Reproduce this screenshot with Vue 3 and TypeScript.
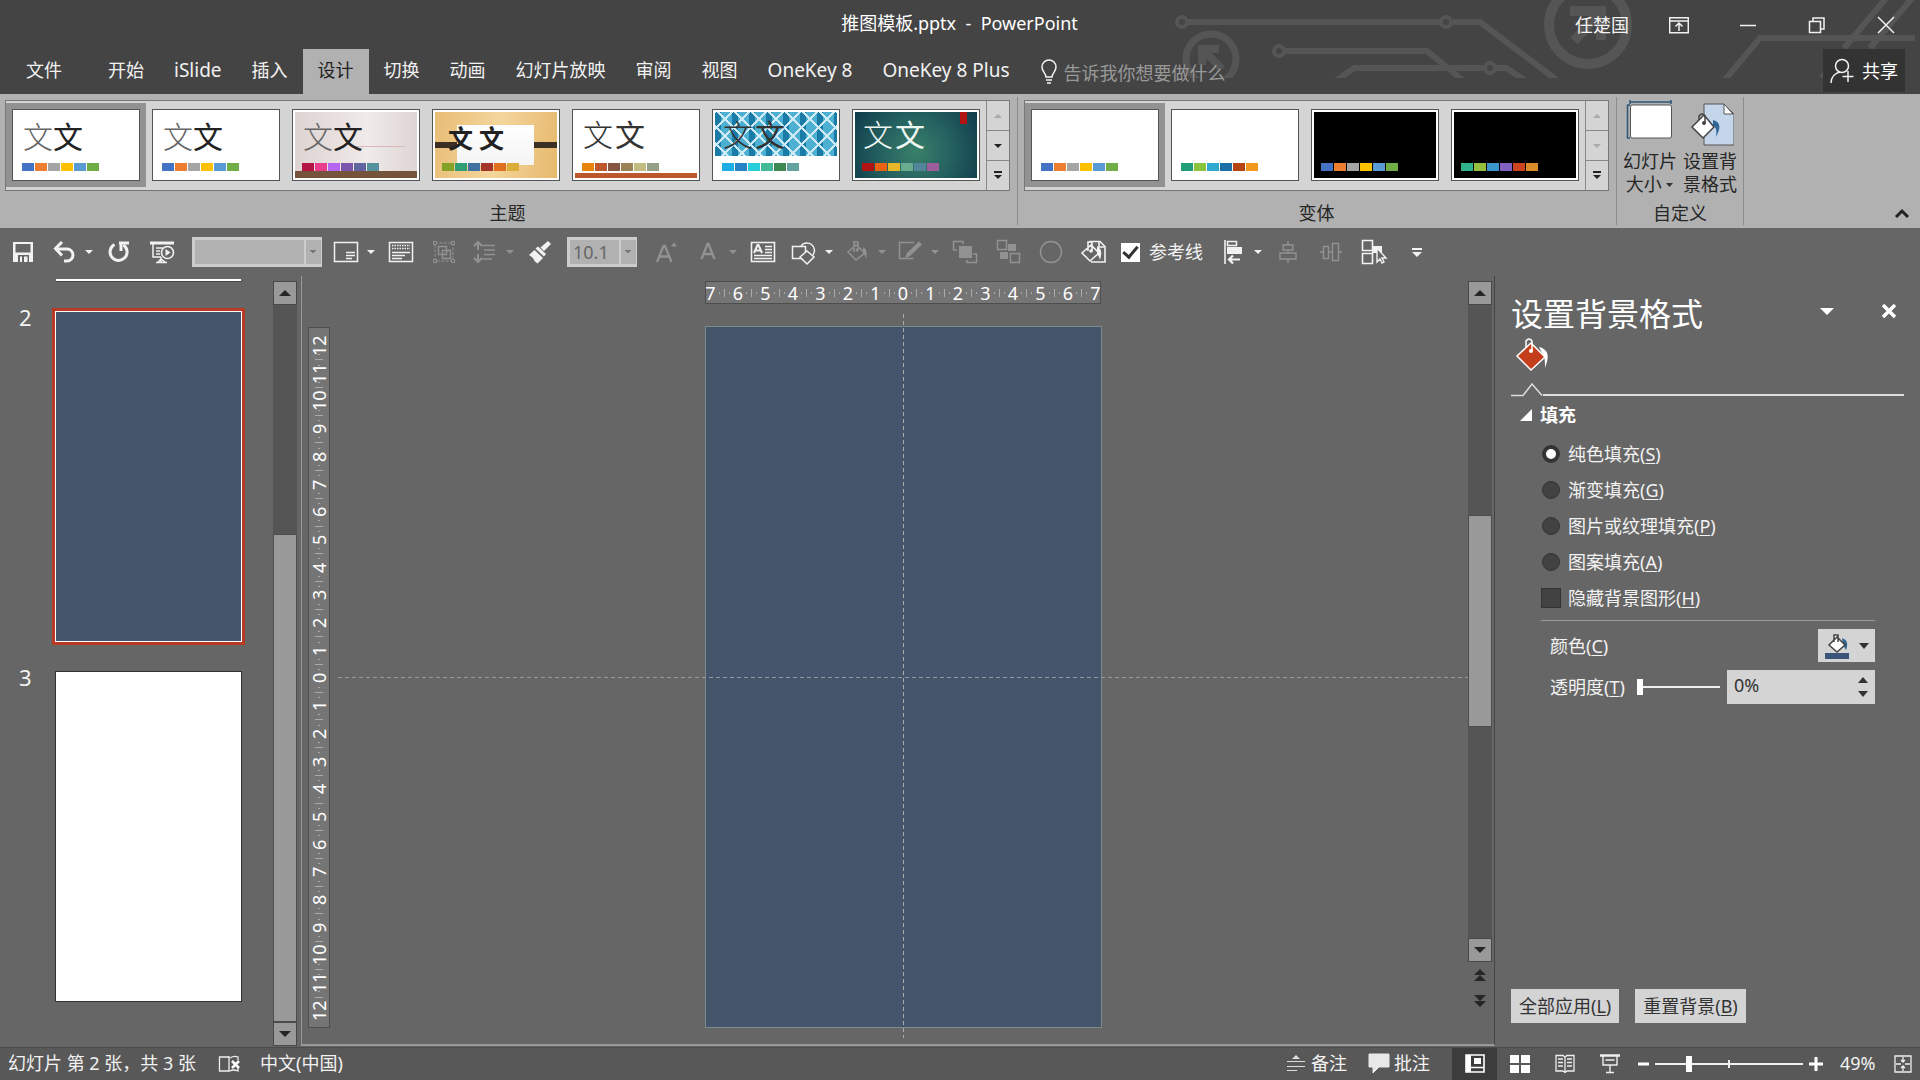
<script setup lang="ts">
import { ref } from 'vue'

interface Thumb {
  name: string
  kind: string
  swatches: string[]
  selected?: boolean
}

interface Tool {
  id: string
  label: string
  icon?: string
  kind?: 'split' | 'style' | 'size' | 'check' | 'more'
  off?: boolean
}

const office = ['#4472c4', '#ed7d31', '#a5a5a5', '#ffc000', '#5b9bd5', '#70ad47']

const tabs = ['文件', '开始', 'iSlide', '插入', '设计', '切换', '动画', '幻灯片放映', '审阅', '视图', 'OneKey 8', 'OneKey 8 Plus']
const activeTab = ref('设计')
const isLatin = (t: string): boolean => /^[A-Za-z]/.test(t)

const themes: Thumb[] = [
  { name: '主题 1', kind: 'plain', swatches: office, selected: true },
  { name: '主题 2', kind: 'plain', swatches: office },
  { name: '主题 3', kind: 'gallery-wall', swatches: ['#b31441', '#e83e8c', '#b565f2', '#7d55ad', '#6065a0', '#55929c'] },
  { name: '主题 4', kind: 'paper', swatches: ['#84a12a', '#2f9e74', '#40709f', '#a5352a', '#e0701f', '#dcae39'] },
  { name: '主题 5', kind: 'retro', swatches: ['#e8840c', '#bd582c', '#865640', '#9b8357', '#c2bc80', '#94a088'] },
  { name: '主题 6', kind: 'integral', swatches: ['#1cade4', '#2683c6', '#27ced7', '#42ba97', '#3e8853', '#62a39f'] },
  { name: '主题 7', kind: 'ion', swatches: ['#b01513', '#ea6312', '#e6b729', '#6aac90', '#54849a', '#9e5e9b'] },
]

const variants: Thumb[] = [
  { name: '变体 1', kind: 'blank', swatches: office, selected: true },
  { name: '变体 2', kind: 'blank', swatches: ['#1f9e78', '#8ac43f', '#2fa9d0', '#1c6fa6', '#b6440f', '#f2981b'] },
  { name: '变体 3', kind: 'black', swatches: office },
  { name: '变体 4', kind: 'black', swatches: ['#2eb38c', '#93c13f', '#3a97cc', '#8060c0', '#cc4422', '#dc8c28'] },
]

const tools: Tool[] = [
  { id: 'save', label: '保存', icon: 'save' },
  { id: 'undo', label: '撤消', icon: 'undo', kind: 'split' },
  { id: 'redo', label: '重复', icon: 'redo' },
  { id: 'show', label: '从头开始放映', icon: 'show' },
  { id: 'style', label: '字体', kind: 'style' },
  { id: 'layout', label: '版式', icon: 'layout', kind: 'split' },
  { id: 'text', label: '文本框', icon: 'text' },
  { id: 'group', label: '组合', icon: 'group', off: true },
  { id: 'spacing', label: '行距', icon: 'spacing', kind: 'split', off: true },
  { id: 'brush', label: '格式刷', icon: 'brush' },
  { id: 'size', label: '字号', kind: 'size' },
  { id: 'grow', label: '增大字号', icon: 'grow', off: true },
  { id: 'color', label: '字体颜色', icon: 'color', kind: 'split', off: true },
  { id: 'art', label: '文本', icon: 'art' },
  { id: 'shapes', label: '形状', icon: 'shapes', kind: 'split' },
  { id: 'fill', label: '形状填充', icon: 'fill', kind: 'split', off: true },
  { id: 'outline', label: '形状轮廓', icon: 'outline', kind: 'split', off: true },
  { id: 'front', label: '置于顶层', icon: 'front', off: true },
  { id: 'back', label: '置于底层', icon: 'back', off: true },
  { id: 'oval', label: '椭圆', icon: 'oval', off: true },
  { id: 'format', label: '设置背景格式', icon: 'format' },
  { id: 'guides', label: '参考线', kind: 'check' },
  { id: 'align', label: '左对齐', icon: 'align', kind: 'split' },
  { id: 'center', label: '水平居中', icon: 'center', off: true },
  { id: 'spread', label: '横向分布', icon: 'spread', off: true },
  { id: 'pane', label: '选择窗格', icon: 'pane' },
  { id: 'more', label: '自定义快速访问工具栏', icon: 'more', kind: 'more' },
]

const icons: Record<string, string> = {
  save: '<path d="M4 4h20v20H4z" fill="currentColor"/><path d="M6.500 6h15v8.500h-15z" fill="#666"/><path d="M9 17h11v7H9z" fill="#666"/><path d="M11 18.500h2V24h-2zM15 18.500h3.500V24H15z" fill="currentColor"/>',
  undo: '<path d="M6 11h11a6 6 0 0 1 0 12h-3" fill="none" stroke="currentColor" stroke-width="3"/><path d="M12 4L5.500 10.500l6.500 7" fill="none" stroke="currentColor" stroke-width="3"/>',
  redo: '<path d="M9.500 6.500a8.500 8.500 0 1 0 9 .5" fill="none" stroke="currentColor" stroke-width="3"/><path d="M14 5h10M16 4v9" fill="none" stroke="currentColor" stroke-width="3"/>',
  show: '<path d="M2 5h24" stroke="currentColor" stroke-width="3"/><path d="M5 6v13h8M8 10h7M8 13h4M8 16h4M13 19v5M8 24.500h11M10 24l3-3 4 3" fill="none" stroke="currentColor" stroke-width="1.500"/><circle cx="19.500" cy="14.500" r="6" fill="#666" stroke="currentColor" stroke-width="1.600"/><path d="M17.500 11l5 3.500-5 3.500z" fill="currentColor"/>',
  layout: '<path d="M2.500 4.500h23v19h-23zM14 14.500h9M14 17.500h9M14 20.500h6" fill="none" stroke="currentColor" stroke-width="1.500"/>',
  text: '<path d="M2.500 4.500h23v19h-23zM5 14.500h18M5 17.500h13M5 20.500h10" fill="none" stroke="currentColor" stroke-width="1.500"/><path d="M5 7.500h18M5 10.500h18" stroke="currentColor" stroke-dasharray="1.500 1" stroke-width="1.500"/>',
  group: '<path d="M5 5h18v18H5z" fill="none" stroke="currentColor" stroke-dasharray="3 1.500"/><path d="M8.500 8.500h8v8h-8zM12.500 12.500h8v8h-8z" fill="none" stroke="currentColor" stroke-width="1.400"/><path d="M3.500 3.500h3v3h-3zM21.500 3.500h3v3h-3zM3.500 21.500h3v3h-3zM21.500 21.500h3v3h-3z" fill="#666" stroke="currentColor"/>',
  spacing: '<path d="M7 4v8M7 16v8M3 8l4-4 4 4M3 20l4 4 4-4" fill="none" stroke="currentColor" stroke-width="2"/><path d="M10 7.500h14M13 12h11M13 16.500h11M11 21h10" stroke="currentColor" stroke-width="1.500"/>',
  brush: '<path d="M22 3l3 3-7 7-3.500-3.500z" fill="currentColor"/><path d="M12 8.500l8 7.500-2 2.500-8.500-8z" fill="currentColor"/><path d="M8.500 12l8.500 8-5.500 5.500-3-2.500-1.500-3-4-3z" fill="currentColor"/>',
  grow: '<path d="M4 24L10.500 8h1.500L18.500 24M6.500 18.500h10" fill="none" stroke="currentColor" stroke-width="2.300"/><path d="M18 8.500l3-4 3 4z" fill="currentColor"/>',
  color: '<path d="M7.500 21L13.500 6h1l6 15M9.500 16h9" fill="none" stroke="currentColor" stroke-width="2.300"/>',
  art: '<path d="M2.500 4.500h23v19h-23zM16 8.500h7M16 11.500h7M16 14.500h7M5 17.500h18M5 20.500h18" fill="none" stroke="currentColor" stroke-width="1.600"/><path d="M5 15l3.500-8h1L13 15M6.500 12.500h5" fill="none" stroke="currentColor" stroke-width="2"/>',
  shapes: '<path d="M2.500 8.500h13v12h-13z" fill="none" stroke="currentColor" stroke-width="1.500"/><path d="M11 8a7.500 7.500 0 1 1 12 9" fill="none" stroke="currentColor" stroke-width="1.500"/><path d="M17 13l7 6-7 7-7-7z" fill="#666" stroke="currentColor" stroke-width="1.500"/>',
  fill: '<path d="M13 7l9 8-9 7-8-8zM11 14V4h4v8" fill="none" stroke="currentColor" stroke-width="1.500"/><circle cx="14" cy="12" r="1.500" fill="currentColor"/><path d="M20 9c4 2 4 6 3 12-1-4-2-5-3-6z" fill="currentColor"/>',
  outline: '<path d="M18 4.500H3.500v16h14" fill="none" stroke="currentColor" stroke-width="1.500"/><path d="M23 3.500l3 3-12 11.500-5 2 2-5z" fill="currentColor"/>',
  front: '<path d="M8 8h13v12H8z" fill="currentColor"/><path d="M6 12H2.500V3.500H12V6M22 16h3.500v8.500H16V22" fill="none" stroke="currentColor" stroke-width="1.500"/>',
  back: '<path d="M14 6h8v7h-8zM6 14h8v7H6z" fill="currentColor"/><path d="M3.500 2.500h9v9h-9zM16.500 15.500h9v9h-9z" fill="#666" stroke="currentColor" stroke-width="1.500"/>',
  oval: '<circle cx="14" cy="14" r="10.500" fill="none" stroke="currentColor" stroke-width="1.500"/>',
  format: '<path d="M10 6V3.500h10l5 5V24H11" fill="none" stroke="currentColor" stroke-width="1.600"/><path d="M19 4v5h5" fill="none" stroke="currentColor" stroke-width="1.600"/><path d="M11 7l8 8-9 8-8-8zM8 13V4h4v9" fill="#666" stroke="currentColor" stroke-width="1.600"/><circle cx="11" cy="13" r="1.800" fill="currentColor"/><path d="M17 8c5 3 5 7 3 14-1-4-2-5-3-6z" fill="currentColor"/>',
  align: '<path d="M6 2v24" stroke="currentColor" stroke-width="1.600"/><path d="M8.500 3.500h9v4h-9z" fill="none" stroke="currentColor" stroke-width="1.500"/><path d="M8 9h15v7H8z" fill="currentColor"/><path d="M21 21.500H10M14 17.500l-4 4 4 4" fill="none" stroke="currentColor" stroke-width="2.200"/>',
  center: '<path d="M14 3v4M14 12v3M14 21v4M9 7h10v5H9zM6 15h16v6H6z" fill="none" stroke="currentColor" stroke-width="1.400"/>',
  spread: '<path d="M3 14h3M12 14h3M22 14h3M6.500 8.500h5v12h-5zM15.500 5.500h6v17h-6z" fill="none" stroke="currentColor" stroke-width="1.400"/>',
  pane: '<path d="M2.500 2.500h10v10h-10zM2.500 15.500h10v10h-10z" fill="none" stroke="currentColor" stroke-width="1.600"/><path d="M12 8h10v7H12z" fill="currentColor"/><path d="M17 10v14l3-3 2 4 2-1-2-4h4z" fill="#666" stroke="currentColor" stroke-width="1.400"/>',
  more: '<path d="M9 10h10v2H9zM9 14h10l-5 5z" fill="currentColor"/>',
}

const styleName = ref('')
const guides = ref(true)
const fillKind = ref('S')
const fills = [
  { key: 'S', text: '纯色填充' },
  { key: 'G', text: '渐变填充' },
  { key: 'P', text: '图片或纹理填充' },
  { key: 'A', text: '图案填充' },
]
const hideShapes = ref(false)
const transparency = ref(0)
const zoom = ref(22)

const span = (n: number): number[] => Array.from({ length: 2 * n + 1 }, (_, i) => Math.abs(i - n))
const across = span(7)
const down = span(12)
</script>

<template>
  <div class="app">
    <header class="top">
      <svg class="circuit" width="750" height="78" viewBox="0 0 750 78" fill="none" stroke="#555" stroke-width="6" aria-hidden="true">
        <path d="M18 22h252M283 22h27l82 62" />
        <circle cx="12" cy="22" r="5" stroke-width="4" />
        <circle cx="276" cy="22" r="5" stroke-width="4" />
        <circle cx="41" cy="59" r="25" stroke-width="7" />
        <path d="M32 65V49h17M33 50l19 19" stroke-width="8" />
        <circle cx="109" cy="51" r="5" stroke-width="4" />
        <path d="M115 51h142l38 31M164 82l20-14h130M326 68h10l22 14" />
        <circle cx="320" cy="68" r="5" stroke-width="4" />
        <circle cx="418" cy="25" r="39" stroke-width="10" />
        <path d="M400 11h31v29M430 12l-26 29" stroke-width="10" />
        <path d="M553 82l37-44h155M674 48l44-52M700 48l44-52M652 78l14-18" />
      </svg>
      <div class="titlebar">
        <h1>推图模板.pptx&nbsp; -&nbsp; PowerPoint</h1>
        <div class="window">
          <span class="user">任楚国</span>
          <button aria-label="功能区显示选项"><svg width="20" height="20" viewBox="0 0 20 20"><path d="M.7 2.700h18.600v15H.7zM.7 6h18.600M10 16V8M6.500 11.500L10 8l3.500 3.500" /></svg></button>
          <button aria-label="最小化"><svg width="20" height="20" viewBox="0 0 20 20"><path d="M2 10.500h16" /></svg></button>
          <button aria-label="向下还原"><svg width="20" height="20" viewBox="0 0 20 20"><path d="M2.500 6.500h11v11h-11zM6 6V3h11v11h-3" /></svg></button>
          <button aria-label="关闭"><svg width="20" height="20" viewBox="0 0 20 20"><path d="M2 2l16 16M18 2L2 18" /></svg></button>
        </div>
      </div>
      <nav class="tabs">
        <button v-for="t in tabs" :key="t" :class="{ active: t === activeTab, latin: isLatin(t) }" @click="activeTab = t">{{ t }}</button>
        <label class="tell">
          <svg width="18" height="26" viewBox="0 0 18 26" aria-hidden="true"><path d="M6 18c0-4-4-5-4-10a7 7 0 0 1 14 0c0 5-4 6-4 10zM6 21h6M7 24h4" /></svg>
          <input type="text" placeholder="告诉我你想要做什么" aria-label="告诉我你想要做什么" />
        </label>
        <button class="share">
          <svg width="24" height="26" viewBox="0 0 24 26" aria-hidden="true"><circle cx="12" cy="8" r="6.500" /><path d="M1 25c0-6 4-10 9-11M18 13v11M12.500 18.500h11" /></svg>
          共享
        </button>
      </nav>
    </header>

    <section class="ribbon">
      <div class="group">
        <div class="gallery">
          <button v-for="t in themes" :key="t.name" class="cell" :class="{ selected: t.selected }" :aria-label="t.name">
            <span class="thumb">
              <span class="art" :class="t.kind">
                <span class="glyphs"><span>文</span><span>文</span></span>
                <span class="swatches"><i v-for="c in t.swatches" :key="c" :style="{ background: c }"></i></span>
              </span>
            </span>
          </button>
          <div class="steps">
            <button class="dim" aria-label="上一行"><svg width="12" height="12"><path d="M2 8h8L6 4z" /></svg></button>
            <button aria-label="下一行"><svg width="12" height="12"><path d="M2 4h8L6 8z" /></svg></button>
            <button aria-label="其他"><svg width="12" height="12"><path d="M2 1h8v2H2zM2 5h8L6 9z" /></svg></button>
          </div>
        </div>
        <h2>主题</h2>
      </div>
      <div class="group">
        <div class="gallery">
          <button v-for="t in variants" :key="t.name" class="cell" :class="{ selected: t.selected }" :aria-label="t.name">
            <span class="thumb">
              <span class="art" :class="t.kind">
                <span class="swatches"><i v-for="c in t.swatches" :key="c" :style="{ background: c }"></i></span>
              </span>
            </span>
          </button>
          <div class="steps">
            <button class="dim" aria-label="上一行"><svg width="12" height="12"><path d="M2 8h8L6 4z" /></svg></button>
            <button class="dim" aria-label="下一行"><svg width="12" height="12"><path d="M2 4h8L6 8z" /></svg></button>
            <button aria-label="其他"><svg width="12" height="12"><path d="M2 1h8v2H2zM2 5h8L6 9z" /></svg></button>
          </div>
        </div>
        <h2>变体</h2>
      </div>
      <div class="group custom">
        <div class="big-buttons">
          <button>
            <svg width="48" height="51" viewBox="0 0 48 51" aria-hidden="true"><path d="M4 3h41M4 1v4M45 1v4M1 6h3M1 39h3M1.500 6v33" fill="none" stroke="#2f5577" stroke-width="1.500" /><rect x="4.500" y="6" width="41" height="33" rx="2" fill="#fff" stroke="#555" /></svg>
            <span>幻灯片<br />大小 <svg width="8" height="6"><path d="M0 1h7L3.500 5z" fill="#333" /></svg></span>
          </button>
          <button>
            <svg width="48" height="51" viewBox="0 0 48 51" aria-hidden="true"><path d="M18 5h20l10 10v31H18z" fill="#c5d5ea" stroke="#555" /><path d="M38 5v10h9z" fill="#fff" stroke="#555" /><path d="M27 21c8 2 8 8 3 17 1-8 0-9-3-12z" fill="#2f6799" /><path d="M18 16l10 12-11 11L6 28z" fill="#fff" stroke="#444" stroke-width="1.500" /><path d="M13 21v-4q3-4 6 0v7" fill="none" stroke="#444" stroke-width="1.500" /><circle cx="18" cy="24" r="2" fill="#444" /></svg>
            <span>设置背<br />景格式</span>
          </button>
        </div>
        <h2>自定义</h2>
      </div>
      <button class="collapse" aria-label="折叠功能区"><svg width="16" height="12"><path d="M2 10l6-6 6 6" fill="none" stroke="#222" stroke-width="3" /></svg></button>
    </section>

    <div class="quick">
      <template v-for="t in tools" :key="t.id">
        <select v-if="t.kind === 'style'" v-model="styleName" class="combo wide" :aria-label="t.label"><option value=""></option></select>
        <select v-else-if="t.kind === 'size'" class="combo" :aria-label="t.label"><option>10.1</option></select>
        <label v-else-if="t.kind === 'check'" class="guide-check"><input v-model="guides" type="checkbox" />{{ t.label }}</label>
        <button v-else class="tool" :class="{ split: t.kind === 'split', off: t.off }" :aria-label="t.label">
          <span class="face"><svg width="28" height="28" viewBox="0 0 28 28" aria-hidden="true" v-html="icons[t.icon ?? '']"></svg></span>
          <svg v-if="t.kind === 'split'" width="8" height="6" aria-hidden="true"><path d="M0 1h8L4 5z" fill="currentColor" /></svg>
        </button>
      </template>
    </div>

    <main class="work">
      <aside class="slides">
        <div class="slide-item first"><span></span><div class="mini edge"></div></div>
        <div class="slide-item"><span>2</span><div class="mini current"></div></div>
        <div class="slide-item"><span>3</span><div class="mini"></div></div>
      </aside>
      <div class="scroll left">
        <button aria-label="向上滚动"><svg width="12" height="8"><path d="M0 7h12L6 1z" /></svg></button>
        <div class="track"><div class="upper"></div><div class="grip"></div></div>
        <button aria-label="向下滚动"><svg width="12" height="8"><path d="M0 1h12L6 7z" /></svg></button>
      </div>

      <section class="editor">
        <div class="ruler down">
          <template v-for="(n, i) in down" :key="i">
            <span v-if="i" class="ticks"><i></i><i></i><i></i></span>
            <span class="num">{{ n }}</span>
          </template>
        </div>
        <div class="stage">
          <div class="ruler across">
            <template v-for="(n, i) in across" :key="i">
              <span v-if="i" class="ticks"><i></i><i></i><i></i></span>
              <span class="num">{{ n }}</span>
            </template>
          </div>
          <div class="slide"></div>
          <div v-if="guides" class="guide-h"></div>
          <div v-if="guides" class="guide-v"></div>
        </div>
        <div class="scroll right">
          <button aria-label="向上滚动"><svg width="12" height="8"><path d="M0 7h12L6 1z" /></svg></button>
          <div class="track"><div class="upper"></div><div class="grip"></div><div class="lower"></div></div>
          <button aria-label="向下滚动"><svg width="12" height="8"><path d="M0 1h12L6 7z" /></svg></button>
          <button class="bare" aria-label="上一张幻灯片"><svg width="12" height="14"><path d="M0 7h12L6 1zM0 13h12L6 7z" /></svg></button>
          <button class="bare" aria-label="下一张幻灯片"><svg width="12" height="14"><path d="M0 1h12L6 7zM0 7h12l-6 6z" /></svg></button>
        </div>
      </section>

      <aside class="pane">
        <div class="pane-head">
          <h2>设置背景格式</h2>
          <button aria-label="任务窗格选项"><svg width="14" height="8"><path d="M0 1h14L7 8z" fill="#fff" /></svg></button>
          <button aria-label="关闭窗格"><svg width="16" height="16"><path d="M2 2l12 12M14 2L2 14" stroke="#fff" stroke-width="3.500" /></svg></button>
        </div>
        <button class="pane-tab" aria-label="填充">
          <svg width="36" height="36" viewBox="0 0 36 36"><path d="M16 7l14 14-14 13L2 20z" fill="#c43e1c" stroke="#fff" stroke-width="1.500" /><path d="M11 12V5q3-4 6 0v10" fill="none" stroke="#fff" stroke-width="1.500" /><circle cx="16" cy="15" r="2" fill="#fff" /><path d="M24 11c11 3 10 11 6 21 0-8 0-9-2-13z" fill="#fff" /></svg>
        </button>
        <div class="pane-line"><svg width="32" height="14"><path d="M0 12.500h12L21 1l10 11.500" fill="none" stroke="#ddd" stroke-width="1.500" /></svg><span></span></div>
        <h3><svg width="12" height="12"><path d="M12 0v12H0z" fill="#fff" /></svg>填充</h3>
        <div class="options">
          <label v-for="f in fills" :key="f.key"><input v-model="fillKind" type="radio" name="fill" :value="f.key" /><span>{{ f.text }}(<u>{{ f.key }}</u>)</span></label>
          <label><input v-model="hideShapes" type="checkbox" /><span>隐藏背景图形(<u>H</u>)</span></label>
        </div>
        <div class="settings">
          <div class="row">
            <label for="fill-color">颜色(<u>C</u>)</label>
            <button id="fill-color" class="picker" aria-label="颜色">
              <svg width="26" height="26" viewBox="0 0 26 26"><path d="M1 20h24v6H1z" fill="#3b5578" /><path d="M18 5c6 2 6 7 4 12l-3-5z" fill="#2f6799" /><path d="M13 4l8 8-8 7-8-7zM10 9V2h4v7" fill="#fff" stroke="#444" stroke-width="1.500" /></svg>
              <svg width="10" height="6"><path d="M0 0h10L5 6z" fill="#333" /></svg>
            </button>
          </div>
          <div class="row">
            <label for="transparency">透明度(<u>T</u>)</label>
            <input id="transparency" v-model.number="transparency" class="slider" type="range" min="0" max="100" />
            <div class="spin">
              <input type="text" :value="transparency + '%'" aria-label="透明度数值" />
              <div>
                <button aria-label="增加"><svg width="10" height="6"><path d="M0 6h10L5 0z" /></svg></button>
                <button aria-label="减少"><svg width="10" height="6"><path d="M0 0h10L5 6z" /></svg></button>
              </div>
            </div>
          </div>
        </div>
        <div class="pane-foot">
          <button>全部应用(<u>L</u>)</button>
          <button>重置背景(<u>B</u>)</button>
        </div>
      </aside>
    </main>

    <footer class="status">
      <span>幻灯片 第 2 张，共 3 张</span>
      <button class="spell" aria-label="拼写检查"><svg width="24" height="20" viewBox="0 0 24 20"><path d="M11 3H1.500v14H11M11 2v16M12 4c3-2 5-2 8-1v3M12 17c3-2 5-1 8 0v-3" fill="none" stroke="#eee" stroke-width="1.300" /><path d="M14 7l7 7M21 7l-7 7" stroke="#fff" stroke-width="2.500" /></svg></button>
      <span>中文(中国)</span>
      <button class="notes"><svg width="18" height="18"><path d="M9 1l4 4H5zM0 7h18v1H0zM0 12h18v1H0zM0 16h10v1H0z" fill="#ddd" /></svg>备注</button>
      <button class="comments"><svg width="24" height="20"><path d="M2 1h20v13H12l-6 6v-6H2z" fill="#e8e8e8" stroke="#e8e8e8" /></svg>批注</button>
      <div class="views">
        <button class="on" aria-label="普通视图"><svg width="20" height="20"><path d="M1 1h18v17H1zM6 13.500h13" fill="none" stroke="#fff" stroke-width="1.600" /><path d="M1 1h5v17H1zM9 4h7v6H9z" fill="#fff" /></svg></button>
        <button aria-label="幻灯片浏览"><svg width="20" height="20"><path d="M0 1h9v8H0zM11 1h9v8h-9zM0 11h9v8H0zM11 11h9v8h-9z" fill="#fff" /></svg></button>
        <button aria-label="阅读视图"><svg width="20" height="20"><path d="M10 2v17M10 3l-2-1.500H1V17h7l2 1.500 2-1.500h7V1.500h-7zM3 5h5M3 8.500h5M3 12h5M12 5h5M12 8.500h5M12 12h5" fill="none" stroke="#eee" stroke-width="1.300" /></svg></button>
        <button aria-label="幻灯片放映"><svg width="20" height="20"><path d="M0 1.500h20" stroke="#eee" stroke-width="2.500" /><path d="M3 2v9h14V2M5.500 6h9M10 11v7M6 18.500h8" fill="none" stroke="#eee" stroke-width="1.400" /></svg></button>
      </div>
      <button class="step" aria-label="缩小"><svg width="14" height="14"><path d="M2 7h11" stroke="#fff" stroke-width="3" /></svg></button>
      <input v-model.number="zoom" class="zoom" type="range" min="0" max="100" aria-label="缩放" />
      <button class="step" aria-label="放大"><svg width="14" height="14"><path d="M0 7h14M7 0v14" stroke="#fff" stroke-width="3" /></svg></button>
      <span class="percent">49%</span>
      <button class="fit" aria-label="使幻灯片适应当前窗口"><svg width="18" height="18"><path d="M1 1h16v16H1zM9 2v5M9 11v5M2 9h5M11 9h5M7 5l2 2 2-2M7 13l2-2 2 2" fill="none" stroke="#eee" stroke-width="1.300" /></svg></button>
    </footer>
  </div>
</template>

<style>
body { background: #666; }
</style>

<style scoped>
* { box-sizing: border-box; }
.app {
  display: flex;
  flex-direction: column;
  min-height: 100vh;
  background: #666;
  color: #f2f2f2;
  font: 18px/24px "Noto Sans", "Noto Sans CJK SC", sans-serif;
}
button, input, select { font: inherit; color: inherit; margin: 0; }
button { border: 0; padding: 0; background: none; cursor: pointer; }
h1, h2, h3 { margin: 0; font: inherit; }
svg { flex: none; }
u { text-underline-offset: 2px; }

.top { position: relative; background: #444; }
.circuit { position: absolute; right: 0; top: 0; }
.titlebar, .tabs { position: relative; display: flex; }
.titlebar { height: 49px; justify-content: flex-end; }
h1 { flex: 1; padding-left: 344px; text-align: center; line-height: 46px; color: #fff; }
.window { display: flex; align-items: center; }
.window .user { padding-right: 15px; line-height: 40px; }
.window button { width: 69px; height: 40px; display: flex; align-items: center; justify-content: center; }
.window svg, .tell svg, .share svg { fill: none; stroke: #f2f2f2; stroke-width: 1.5px; }
.tabs { height: 45px; }
.tabs > button { padding: 0 15px 4px; white-space: nowrap; }
.tabs > button.latin { font-size: 19px; }
.tabs > button:first-child { padding: 0 31px 4px 26px; }
.tabs > button.active { background: #b1b1b1; color: #222; }
.tell { display: flex; align-items: center; gap: 6px; padding-left: 15px; }
.tell input { width: 190px; padding: 2px 0 0; border: 0; background: none; outline: 0; }
.tell input::placeholder { color: #999; opacity: 1; }
.tabs > .share { display: flex; align-items: center; gap: 8px; height: 43px; margin: 0 15px 0 auto; padding: 0 7px; background: #333; color: #fff; }

.ribbon { display: flex; height: 134px; padding: 3px 0 3px 5px; background: #b1b1b1; color: #262626; }
.group { display: flex; flex-direction: column; justify-content: space-between; padding: 3px 7px 0 0; margin-right: 6px; border-right: 1px solid #8c8c8c; }
.group h2 { text-align: center; height: 24px; }
.gallery { display: flex; height: 91px; background: #d4d4d4; border: 1px solid #777; }
.cell { display: flex; align-items: center; width: 140px; padding: 0 6px; border: 0 solid #d4d4d4; border-width: 2px 0 3px; }
.cell.selected { background: #929292; }
.thumb { flex: 1; height: 72px; padding: 2px; border: 1px solid #555; background: #fff; }
.art { display: flex; flex-direction: column; justify-content: space-between; height: 66px; padding: 6px 7px 7px; }
.glyphs { display: flex; height: 34px; padding-left: 1px; font: 300 30px/34px "Noto Sans CJK SC", sans-serif; color: #666; }
.glyphs span:last-child { font-weight: 400; color: #222; }
.swatches { display: flex; gap: 1px; margin-top: auto; }
.swatches i { width: 12px; height: 8px; }
.black { background: #000; }
.gallery-wall { background: linear-gradient(#d9b8bb, #d9b8bb) 60px 34px / 50px 1px no-repeat, linear-gradient(transparent 59px, #75543b 59px), linear-gradient(90deg, #ddd4d2, #f0eaea 60%, #ddd5d3); }
.paper { background: linear-gradient(#fff, #f4f4f4) 22px 13px / 77px 40px no-repeat, linear-gradient(#3c3024, #3c3024) 0 30px / 100% 6px no-repeat, linear-gradient(100deg, #e8bd76, #f4d69c 50%, #e6b86c); }
.paper .glyphs { gap: 6px; padding-left: 6px; font: bold 25px/38px "Noto Sans CJK SC", sans-serif; }
.paper .glyphs span { color: #222; font-weight: bold; }
.paper .swatches { padding-left: 0; }
.retro { background: linear-gradient(transparent 61px, #bd582c 61px); }
.retro .glyphs, .integral .glyphs, .ion .glyphs { gap: 2px; line-height: 30px; }
.integral {
  background:
    linear-gradient(#fff, #fff) 0 100% / 100% 22px no-repeat,
    repeating-linear-gradient(45deg, #cdeaf5 0 2px, transparent 2px 12px),
    repeating-linear-gradient(-45deg, #cdeaf5 0 2px, transparent 2px 12px),
    repeating-linear-gradient(90deg, #1a7ca6 0 6px, #4db0d2 6px 17px);
}
.integral .glyphs span, .retro .glyphs span { color: #333; }
.ion { background: linear-gradient(#b01513, #b01513) 105px 0 / 7px 12px no-repeat, radial-gradient(circle at 50% 60%, #398169, #246060 50%, #103c4a); }
.ion .glyphs span { color: #eef6f2; }
.steps { display: flex; flex-direction: column; width: 23px; border-left: 1px solid #888; }
.steps button { flex: 1; display: flex; align-items: center; justify-content: center; }
.steps button + button { border-top: 1px solid #888; }
.steps svg { fill: #222; }
.steps .dim svg { fill: #aaa; }
.custom { padding: 3px 6px 0 0; }
.big-buttons { display: flex; gap: 6px; margin-top: -1px; }
.big-buttons button { width: 54px; height: 92px; line-height: 23px; white-space: nowrap; }
.big-buttons button > svg { display: block; margin: 0 auto; }
.big-buttons span svg { vertical-align: 3px; }
.collapse { margin: auto 10px 6px auto; height: 12px; display: flex; }

.quick { display: flex; align-items: center; height: 48px; padding-left: 1px; }
.tool { display: flex; align-items: center; width: 43px; height: 40px; }
.tool.split { width: 53px; }
.face { display: flex; flex: 1; justify-content: center; }
.split .face { flex: none; width: 39px; margin-right: 2px; }
.off { color: #929292; }
.combo { appearance: none; width: 70px; height: 30px; margin: 0 8px 0 6px; padding: 0 20px 0 3px; border: 3px solid #ccc; border-right-width: 1px; border-radius: 0; color: #666; line-height: 22px;
  background: conic-gradient(from -45deg at 50% 100%, #777 90deg, transparent 0) right 4px top 10px / 8px 4px no-repeat, linear-gradient(90deg, transparent calc(100% - 17px), #ccc calc(100% - 17px), #ccc calc(100% - 15px), transparent 0), #b1b1b1; }
.combo { background: linear-gradient(to bottom left, transparent 50%, #777 50%) right 4px top 10px / 4px 4px no-repeat, linear-gradient(to bottom right, transparent 50%, #777 50%) right 8px top 10px / 4px 4px no-repeat, linear-gradient(90deg, transparent calc(100% - 17px), #ccc calc(100% - 17px), #ccc calc(100% - 15px), transparent 0), #b1b1b1; }
.combo { background: linear-gradient(to top left, transparent 50%, #777 50%) right 4px top 10px / 4px 4px no-repeat, linear-gradient(to top right, transparent 50%, #777 50%) right 8px top 10px / 4px 4px no-repeat, linear-gradient(90deg, transparent calc(100% - 17px), #ccc calc(100% - 17px), #ccc calc(100% - 15px), transparent 0), #b1b1b1; }
.combo.wide { width: 130px; margin: 0 4px 0 9px; }
.guide-check { display: flex; align-items: center; gap: 9px; width: 98px; padding-left: 6px; white-space: nowrap; }
.guide-check input { appearance: none; width: 19px; height: 19px; background: #fff; display: grid; place-items: center; }
.guide-check input:checked::after { content: ""; width: 6px; height: 12px; margin-top: -3px; border: solid #333; border-width: 0 3px 3px 0; transform: rotate(40deg); }

.work { flex: 1; display: flex; min-height: 0; }
.slides { width: 273px; padding-top: 3px; }
.slide-item { display: flex; padding-left: 19px; margin-bottom: 29px; }
.slide-item span { width: 36px; font-size: 22px; line-height: 12px; }
.mini { width: 187px; height: 331px; background: #fff; border: 1px solid #333; }
.mini.edge { height: 3px; border-top: 0; border-color: #fff #666 #444; background: #fff; }
.mini.current { border: 1px solid #fff; background: #44546a; outline: 3px solid #b83a24; }
.scroll { display: flex; flex-direction: column; width: 24px; padding-top: 5px; }
.scroll button { display: flex; align-items: center; justify-content: center; height: 24px; background: #999; border: 1px solid #484848; }
.scroll svg { fill: #262626; }
.scroll .bare { background: none; border: 0; height: 26px; }
.track { flex: 1; display: flex; flex-direction: column; background: #555; }
.grip { background: #999; border: 1px solid #4d4d4d; }
.left .upper { flex: 229; }
.left .grip { flex: 487; }
.right .upper { flex: 211; }
.right .grip { flex: 210; }
.right .lower { flex: 212; }
.scroll.left { padding-bottom: 1px; }
.scroll.right { width: 24px; margin: 0 2px 0 auto; padding-bottom: 30px; }

.editor { flex: 1; display: flex; margin-left: 4px; border-left: 1px solid #999; border-bottom: 2px solid #999; margin-bottom: 1px; border-right: 1px solid #444; }
.ruler { display: flex; align-items: center; background: #757575; border: 1px solid #4d4d4d; color: #fff; }
.ruler .ticks { flex: 1; display: flex; align-items: center; justify-content: space-evenly; }
.ruler i { background: #aaa; width: 1px; height: 2px; }
.ruler i:nth-child(2) { height: 8px; }
.ruler .num { display: flex; justify-content: center; width: 9px; }
.ruler.across { width: 396px; height: 23px; }
.ruler.down { flex-direction: column; width: 22px; margin: 51px 0 16px 6px; padding: 14px 0 12px; }
.down .ticks { flex-direction: column; }
.down .num { height: 8px; width: 20px; align-items: center; writing-mode: vertical-rl; transform: rotate(180deg); }
.down i { width: 2px; height: 1px; }
.down i:nth-child(2) { width: 8px; height: 1px; }
.stage { position: relative; flex: 1; display: flex; flex-direction: column; align-items: center; margin-left: 8px; padding: 5px 0 16px; }
.slide { flex: 1; width: 397px; margin-top: 22px; background: #44546a; border: 1px solid #7b8a8a; }
.guide-h { position: absolute; left: 0; right: 0; top: 401px; height: 1px; background: repeating-linear-gradient(90deg, #999 0 4px, transparent 4px 7px); }
.guide-v { position: absolute; left: 50%; top: 38px; bottom: 6px; width: 1px; background: repeating-linear-gradient(#aaa 0 4px, transparent 4px 7px); }

.pane { display: flex; flex-direction: column; width: 425px; padding: 20px 16px 24px 16px; }
.pane-head { display: flex; align-items: center; height: 36px; }
.pane-head h2 { flex: 1; font-size: 32px; line-height: 36px; color: #fff; }
.pane-head button { display: flex; justify-content: center; width: 30px; margin-bottom: 6px; }
.pane-head button + button { margin-left: 32px; }
.pane-tab { display: flex; width: 36px; height: 36px; margin: 4px 0 10px 4px; }
.pane-line { display: flex; align-items: flex-end; height: 14px; margin-top: 1px; }
.pane-line span { flex: 1; height: 2px; margin-bottom: 1px; background: #ddd; }
h3 { display: flex; align-items: center; gap: 8px; height: 36px; padding-left: 9px; font-weight: bold; color: #fff; }
.options { display: flex; flex-direction: column; margin: 3px 29px 0 30px; padding-bottom: 4px; border-bottom: 1px solid #999; }
.options label { display: flex; align-items: center; gap: 8px; height: 36px; }
.options input { appearance: none; width: 18px; height: 18px; margin-left: 1px; border: 1px solid #333; background: #424242; display: grid; place-items: center; }
.options input[type="checkbox"] { width: 20px; height: 20px; margin: 0 -1px 0 0; }
.options input[type="radio"] { border-radius: 50%; }
.options input:checked { border: 4px solid #333; background: #fff; }
.settings { display: flex; flex-direction: column; gap: 8px; margin: 8px 29px 0 39px; }
.row { display: flex; align-items: center; height: 33px; }
.picker { display: flex; align-items: center; justify-content: center; gap: 9px; width: 57px; height: 33px; margin-left: auto; background: #d4d4d4; }
.slider, .zoom { appearance: none; height: 20px; background: linear-gradient(#eee, #eee) 0 50% / 100% 2px no-repeat; }
.slider { width: 83px; margin-left: auto; }
.slider::-webkit-slider-thumb, .zoom::-webkit-slider-thumb { appearance: none; width: 6px; height: 16px; background: #fff; }
.spin { display: flex; width: 148px; height: 34px; margin-left: 7px; background: #d4d4d4; color: #333; }
.spin input { flex: 1; min-width: 0; padding: 0 0 3px 7px; border: 0; background: none; }
.spin > div { display: flex; flex-direction: column; width: 24px; padding: 3px 0; }
.spin button { flex: 1; display: flex; align-items: center; justify-content: center; }
.spin svg { fill: #333; }
.pane-foot { display: flex; gap: 16px; margin-top: auto; }
.pane-foot button { height: 34px; padding: 0 8px; background: #d4d4d4; color: #333; }

.status { display: flex; align-items: center; height: 33px; padding: 0 8px; background: #585858; border-top: 1px solid #4a4a4a; white-space: nowrap; }
.status > span, .status .notes, .status .comments { padding-bottom: 2px; }
.status button { display: flex; align-items: center; justify-content: center; }
.status .spell { margin: 0 18px 0 22px; }
.status .notes { gap: 6px; margin-left: auto; }
.status .comments { gap: 3px; margin: 0 22px 0 20px; }
.views { display: flex; align-self: stretch; }
.views button { width: 45px; }
.views .on { background: #3c3c3c; }
.step { width: 14px; margin-left: 4px; }
.zoom { width: 148px; margin: 0 6px 0 5px; background: linear-gradient(#eee, #eee) 0 50% / 100% 2px no-repeat, linear-gradient(#eee, #eee) 50% 50% / 2px 8px no-repeat; }
.zoom + .step { margin: 0; }
.percent { width: 56px; padding-left: 17px; }
.fit { margin-left: 15px; }
</style>
